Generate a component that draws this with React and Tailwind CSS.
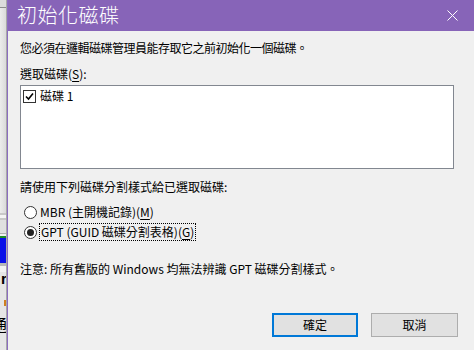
import React from "react";

const font = { fontFamily: '"Noto Sans CJK TC", "Noto Sans", sans-serif' };

function U({ children }) {
  return <span className="underline underline-offset-2">{children}</span>;
}

export default function App() {
  return (
    <div
      className="flex w-[474px] h-[350px] overflow-hidden bg-[#f0f0f0] text-[12px] leading-[16px] text-black"
      style={font}
    >
      {/* background app strip */}
      <div className="w-[7px] h-full flex flex-col shrink-0 overflow-hidden bg-[#e6e6e6] border-r border-[#a8a8a8]">
        <div className="h-[8px] bg-[#dcdcdc] border-b border-[#8c8c8c]" />
        <div className="h-[205px] bg-gradient-to-r from-[#ececec] to-[#dadada]" />
        <div className="h-[2px] bg-[#c8c8c8]" />
        <div className="h-[3px] bg-[#f4f4f4]" />
        <div className="h-[2px] bg-[#c8c8c8]" />
        <div className="h-[13px] bg-[#e0e0e0]" />
        <div className="h-[1px] bg-[#b0b0b0]" />
        <div className="h-[2px] bg-[#f0f0f0]" />
        <div className="h-[2px] bg-[#1a8a2a]" />
        <div className="h-[25px] bg-[#0a10e8]" />
        <div className="h-[3px] bg-[#b8b8b8]" />
        <div className="h-[6px] bg-[#f2f2f2]" />
        <div className="h-[14px] text-[15px] leading-[14px] font-bold text-black pl-[1px]" style={{ fontFamily: '"Liberation Sans", sans-serif' }}>r</div>
        <div className="h-[14px]" />
        <div className="h-[8px] flex justify-end"><div className="w-[2px] h-[6px] bg-[#d08020]" /></div>
        <div className="h-[6px]" />
        <div className="h-[20px] w-[7px] overflow-hidden">
          <div className="text-[16px] leading-[20px] -ml-[9px] w-[20px]" style={font}>通</div>
        </div>
      </div>

      {/* dialog */}
      <div className="flex-1 flex flex-col border-l border-[#8b6cc0]">
        <div className="h-[31px] shrink-0 bg-[#8764b8] flex items-center justify-between">
          <div className="pl-[9px] text-[20px] leading-[24px] font-light tracking-[0.5px] text-white -mt-[1px]">初始化磁碟</div>
          <svg width="11" height="11" viewBox="0 0 11 11" className="mr-[16px]">
            <path d="M0.5 0.5 L10.5 10.5 M10.5 0.5 L0.5 10.5" stroke="white" strokeWidth="1" />
          </svg>
        </div>
        <div className="flex-1 flex flex-col pl-[12px] pt-[9px]">
          <div className="tracking-[-0.5px]">您必須在邏輯磁碟管理員能存取它之前初始化一個磁碟。</div>
          <div className="mt-[10px]">
            選取磁碟(<U>S</U>):
          </div>
          <div className="mt-[3px] w-[434px] h-[84px] bg-white border border-[#828790] pt-[2px] pl-[2px]">
            <div className="flex items-center gap-[4px]">
              <div className="w-[13px] h-[13px] border border-[#333] bg-white flex items-center justify-center">
                <svg width="9" height="9" viewBox="0 0 9 9">
                  <path d="M1 4.5 L3.5 7 L8 1.5" stroke="#000" strokeWidth="1.6" fill="none" />
                </svg>
              </div>
              <span>磁碟 1</span>
            </div>
          </div>
          <div className="mt-[10px]">請使用下列磁碟分割樣式給已選取磁碟:</div>
          <div className="mt-[9px] flex items-center pl-[4px] gap-[3px]">
            <div className="w-[13px] h-[13px] rounded-full border border-[#333] bg-white" />
            <span>
              MBR (主開機記錄)(<U>M</U>)
            </span>
          </div>
          <div className="mt-[3px] flex items-center pl-[4px] gap-[2px]">
            <div className="w-[13px] h-[13px] rounded-full border border-[#333] bg-white flex items-center justify-center">
              <div className="w-[7px] h-[7px] rounded-full bg-[#222]" />
            </div>
            <span className="border border-dotted border-black px-[1px] leading-[16px]">
              GPT (GUID 磁碟分割表格)(<U>G</U>)
            </span>
          </div>
          <div className="mt-[20px]">注意: 所有舊版的 Windows 均無法辨識 GPT 磁碟分割樣式。</div>
          <div className="mt-[36px] flex justify-end gap-[13px] pr-[16px]">
            <button className="w-[86px] h-[24px] bg-[#e1e1e1] border-2 border-[#0078d7] flex items-center justify-center">
              確定
            </button>
            <button className="w-[87px] h-[24px] bg-[#e1e1e1] border border-[#adadad] flex items-center justify-center">
              取消
            </button>
          </div>
        </div>
      </div>
    </div>
  );
}
